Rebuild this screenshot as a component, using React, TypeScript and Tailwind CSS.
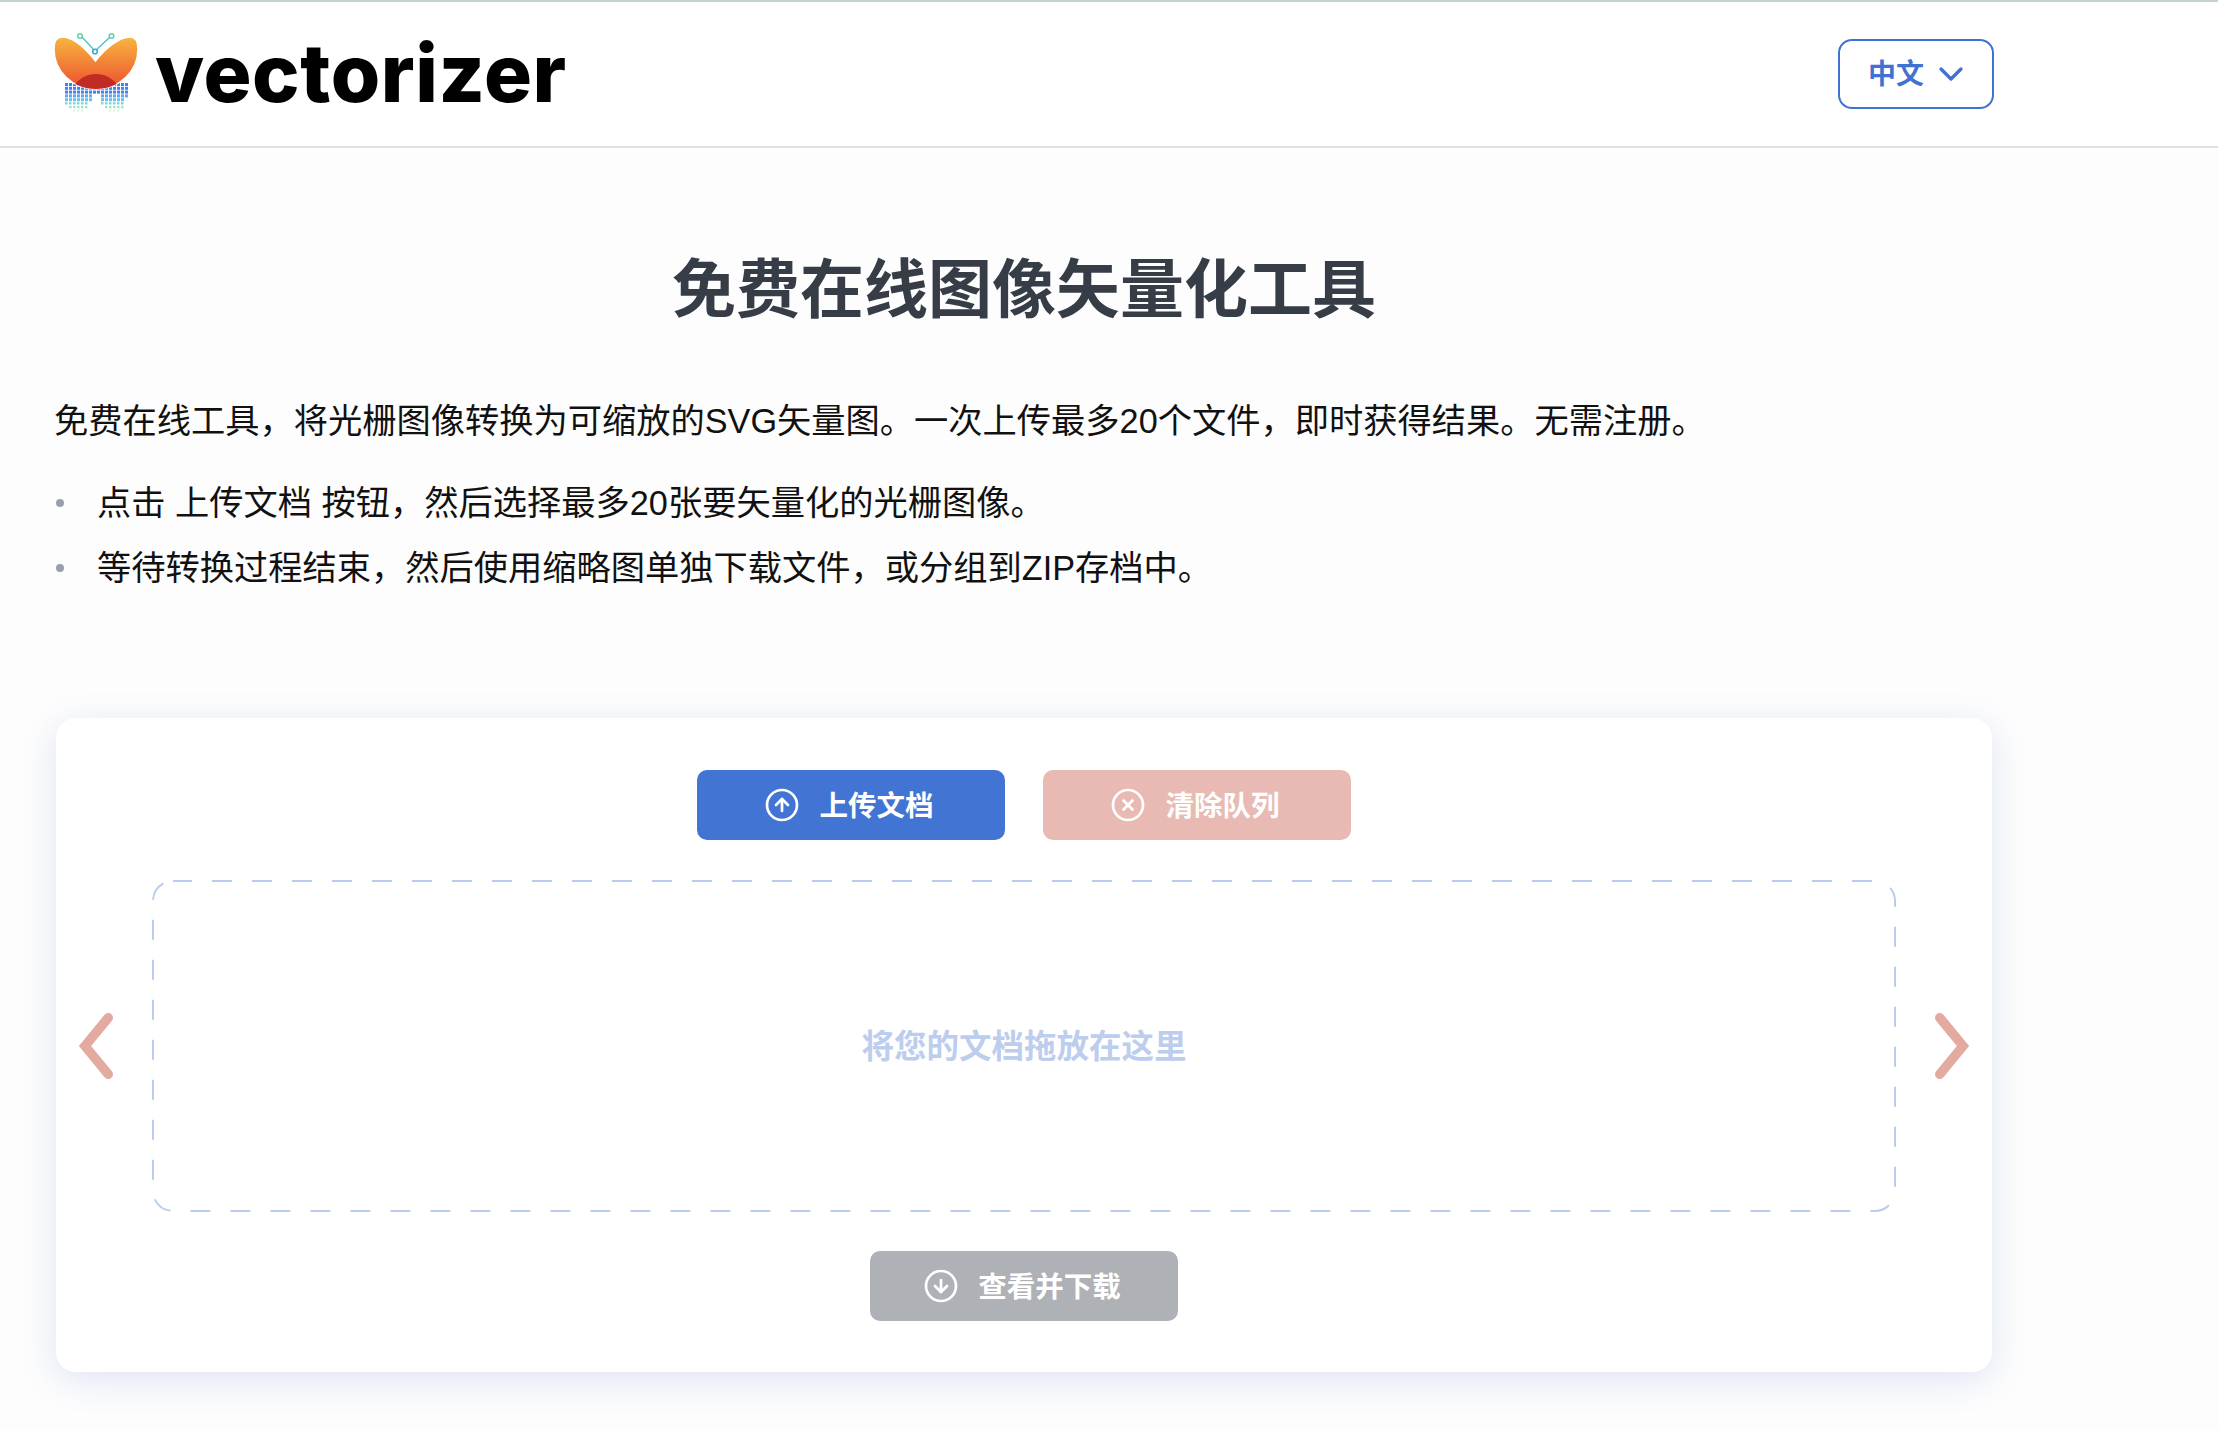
import React from "react";
import { CircleArrowUp, CircleX, CircleArrowDown, ChevronDown } from "lucide-react";

function Logo() {
  const dots: React.ReactNode[] = [];
  const inLobe = (x: number, y: number, cx: number) => {
    const dx = (x - cx) / 14.5;
    const dy = (y - 93) / 21;
    return dx * dx + dy * dy <= 1;
  };
  for (let r = 0; r < 8; r++) {
    const y = 84 + r * 3.8;
    for (let c = 0; c < 16; c++) {
      const x = 65 + c * 4;
      const cxPos = x + 1.5;
      const yPos = y + 1.5;
      const inside = inLobe(cxPos, yPos, 78) || inLobe(cxPos, yPos, 113);
      const bridged = r < 3;
      if (!inside && !bridged) continue;
      const color =
        r < 3 ? "#3f82f2" : r === 3 ? "#62a6f0" : r === 4 ? "#6cbdec" : r === 5 ? "#85d8d8" : r === 6 ? "#9ee8c4" : "#d5f5e4";
      const s = r < 5 ? 3 : r < 7 ? 2.500 : 2;
      dots.push(<rect key={`${r}-${c}`} x={x} y={y} width={s} height={s} fill={color} />);
    }
  }
  return (
    <svg width="95" height="90" viewBox="50 30 95 90" className="shrink-0">
      <defs>
        <linearGradient id="wing" x1="0" y1="0" x2="0" y2="1">
          <stop offset="0" stopColor="#f7b63f" />
          <stop offset="1" stopColor="#ec4f2e" />
        </linearGradient>
        <clipPath id="wingclip">
          <path d="M95.500 62 C86 50 73 38 62 38 C56 38 54 44 54 50 C54 72 72 90 96 90 C120 90 138 72 138 50 C138 44 136 38 130 38 C119 38 105 50 95.500 62Z" />
        </clipPath>
      </defs>
      {dots}
      <path
        d="M95.500 62 C86 50 73 38 62 38 C56 38 54 44 54 50 C54 72 72 90 96 90 C120 90 138 72 138 50 C138 44 136 38 130 38 C119 38 105 50 95.500 62Z"
        fill="url(#wing)"
        stroke="#ffffff"
        strokeWidth="1.500"
      />
      <circle cx="96" cy="102" r="27" fill="#c22a26" clipPath="url(#wingclip)" />
      <path d="M82 38 L95 52 L110 38" fill="none" stroke="#4fc0bd" strokeWidth="1.300" />
      <circle cx="80" cy="37" r="2.300" fill="#ffffff" stroke="#5fd49c" strokeWidth="1.500" />
      <circle cx="111.500" cy="37" r="2.300" fill="#ffffff" stroke="#5fd0a8" strokeWidth="1.500" />
      <circle cx="95" cy="52.500" r="2.300" fill="#ffffff" stroke="#3fa8d0" strokeWidth="1.600" />
    </svg>
  );
}

function ActionButton({
  color,
  icon,
  label,
}: {
  color: string;
  icon: React.ReactNode;
  label: string;
}) {
  return (
    <button
      type="button"
      className={`flex h-[70px] w-[308px] items-center justify-center gap-[19px] rounded-[10px] pr-[4px] text-[28.500px] font-bold leading-none text-white ${color}`}
    >
      {icon}
      <span className="pt-[2px]">{label}</span>
    </button>
  );
}

export default function App() {
  return (
    <div className="min-h-screen w-full bg-[#fdfdfd] font-['Liberation_Sans','Noto_Sans_CJK_SC',sans-serif] text-[#111111]">
      <header className="h-[148px] border-t-2 border-b-2 border-t-[#c3d6c9] border-b-[#e0e0e0] bg-white">
        <div className="flex h-full w-[1994px] items-center justify-between pl-[50px]">
          <div className="flex items-center">
            <Logo />
            <span className="mb-[2px] ml-[10px] font-['Inter',sans-serif] text-[80px] font-extrabold leading-none tracking-[0.6px] text-black">
              vectorizer
            </span>
          </div>
          <button
            type="button"
            className="flex h-[70px] w-[156px] items-center gap-[7px] rounded-[14px] border-2 border-[#3f72d2] pl-[28px] text-[28px] font-semibold leading-none text-[#3f72d2]"
          >
            <span className="pt-[2px]">中文</span>
            <ChevronDown size={40} strokeWidth={2} />
          </button>
        </div>
      </header>

      <main className="w-[1994px] pl-[54px]">
        <h1 className="mt-[102px] text-center text-[64px] font-bold leading-[80px] text-[#363d47]">
          免费在线图像矢量化工具
        </h1>
        <p className="mt-[67px] text-[34.250px] leading-[48px]">
          免费在线工具，将光栅图像转换为可缩放的SVG矢量图。一次上传最多20个文件，即时获得结果。无需注册。
        </p>
        <ul className="mt-[34px] flex flex-col gap-[17px] text-[34.250px] leading-[48px]">
          <li className="flex items-center">
            <span className="ml-[2px] h-[8px] w-[8px] rounded-full bg-[#9aa0aa]" />
            <span className="ml-[33px]">点击 上传文档 按钮，然后选择最多20张要矢量化的光栅图像。</span>
          </li>
          <li className="flex items-center">
            <span className="ml-[2px] h-[8px] w-[8px] rounded-full bg-[#9aa0aa]" />
            <span className="ml-[33px]">等待转换过程结束，然后使用缩略图单独下载文件，或分组到ZIP存档中。</span>
          </li>
        </ul>

        <section className="mx-[2px] mt-[126px] flex h-[654px] flex-col items-center rounded-[20px] bg-white pt-[52px] shadow-[0_8px_36px_rgba(66,100,200,0.16)]">
          <div className="flex gap-[38px]">
            <ActionButton
              color="bg-[#4274d4]"
              icon={<CircleArrowUp size={36} strokeWidth={1.8} />}
              label="上传文档"
            />
            <ActionButton
              color="bg-[#e8bab3]"
              icon={<CircleX size={36} strokeWidth={1.8} />}
              label="清除队列"
            />
          </div>

          <div className="mt-[40px] flex w-full items-center gap-[39px] px-[23px]">
            <svg width="34" height="66" viewBox="0 0 34 66" className="shrink-0 overflow-visible">
              <path d="M29.250 4.750 L6 33 L29.250 61.250" fill="none" stroke="#e3aaa0" strokeWidth="9.500" strokeLinecap="round" />
            </svg>
            <div className="relative flex h-[332px] flex-1 items-center justify-center">
              <svg className="absolute inset-0 h-full w-full" width="1744" height="332">
                <rect
                  x="1"
                  y="1"
                  width="1742"
                  height="330"
                  rx="20"
                  fill="none"
                  stroke="#bacdee"
                  strokeWidth="2"
                  strokeDasharray="20 20"
                  strokeDashoffset="1"
                />
              </svg>
              <span className="pt-[2px] text-[32.500px] font-bold leading-none text-[#bccdee]">将您的文档拖放在这里</span>
            </div>
            <svg width="34" height="66" viewBox="0 0 34 66" className="shrink-0 overflow-visible">
              <path d="M4.750 4.750 L28 33 L4.750 61.250" fill="none" stroke="#e3aaa0" strokeWidth="9.500" strokeLinecap="round" />
            </svg>
          </div>

          <div className="mt-[39px]">
            <ActionButton
              color="bg-[#aeb1b5]"
              icon={<CircleArrowDown size={36} strokeWidth={1.8} />}
              label="查看并下载"
            />
          </div>
        </section>
      </main>
    </div>
  );
}
